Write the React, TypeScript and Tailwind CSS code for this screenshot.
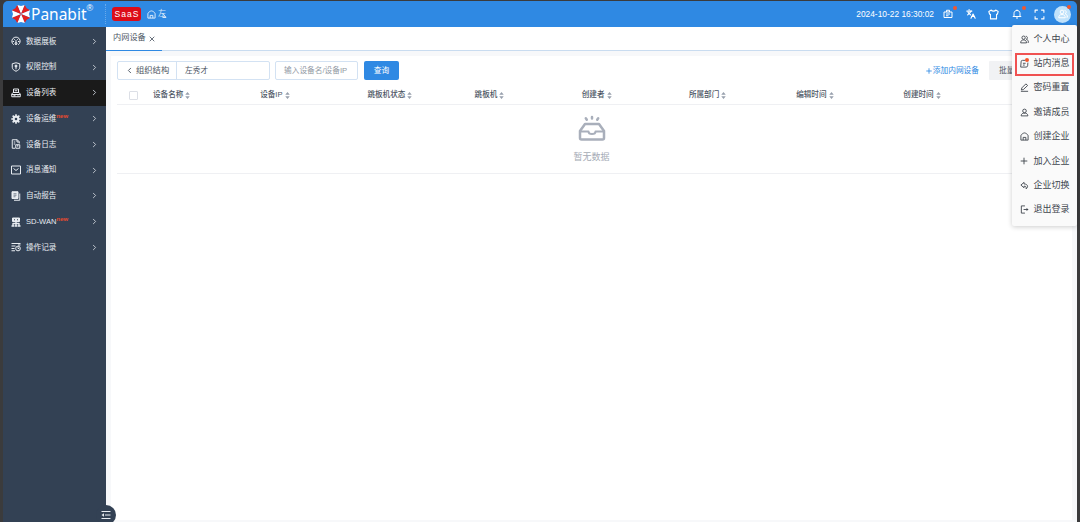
import type { ReactNode } from "react";
import { clsx } from "clsx";
import { ChevronLeft, ChevronRight, Languages, Plus, X } from "lucide-react";

const Glyph = ({
  children,
  className = "size-[10px]",
}: {
  children: ReactNode;
  className?: string;
}) => (
  <svg
    viewBox="0 0 20 20"
    fill="none"
    stroke="currentColor"
    strokeWidth={2}
    strokeLinejoin="round"
    className={clsx("shrink-0", className)}
  >
    {children}
  </svg>
);

const GaugeIcon = () => (
  <Glyph>
    <path d="M5.5 17.5A8.3 8.3 0 1 1 14.5 17.5" />
    <path d="M10 18V8M3 11h3M14 11h3M5.5 5.5l2 2M14.5 5.5l-2 2" />
    <circle cx="10" cy="15" r="2" />
  </Glyph>
);

const ShieldIcon = () => (
  <Glyph>
    <path d="M10 1.5l7.5 2v7c0 4-3.5 6.5-7.5 8-4-1.5-7.5-4-7.5-8v-7z" />
    <circle cx="10" cy="8" r="2" fill="currentColor" />
    <path d="M10 9v5.5" />
  </Glyph>
);

const DeviceIcon = () => (
  <Glyph>
    <path d="M5 9V2h10v7M1.5 17.5V12L4 9h12l2.5 3v5.5z" />
    <path d="M7.5 5.5h5M1.5 13h17M5 15.5h4M13 15.5h2" />
  </Glyph>
);

const GearIcon = () => (
  <Glyph>
    <circle cx="10" cy="10" r="4.7" strokeWidth={4.2} />
    <path
      d="M10 .5v4M10 15.5v4M.5 10h4M15.5 10h4M3.3 3.3l3 3M13.7 13.7l3 3M3.3 16.7l3-3M13.7 6.3l3-3"
      strokeWidth={3.2}
    />
  </Glyph>
);

const LogIcon = () => (
  <Glyph>
    <path d="M8 18.5H2.5v-17h10l4 4V9M12 1.5V6h4.5M5.5 6h3M5.5 10h3" />
    <rect x="9.5" y="11.5" width="8" height="7" />
    <path d="M13.5 11.5v4" />
  </Glyph>
);

const MailIcon = () => (
  <Glyph>
    <rect x="1" y="2" width="18" height="16" />
    <path d="M5 7l5 4 5-4" />
  </Glyph>
);

const ReportIcon = () => (
  <Glyph>
    <path d="M2 1.5h12V15H2z" fill="currentColor" />
    <path d="M17.5 5v13.5H6" />
    <path d="M5 5.5h6M5 8.5h6M5 11.5h4" stroke="#334154" strokeWidth={1.2} />
  </Glyph>
);

const WanIcon = () => (
  <Glyph>
    <path d="M3 2h14v7H3z" fill="currentColor" />
    <path d="M10 9v9M4 18v-5h12v5M1 18h6M8 18h4M13 18h6" strokeWidth={2.8} />
    <path d="M6 5.5h2M12 5.5h2" stroke="#334154" />
  </Glyph>
);

const RecordIcon = () => (
  <Glyph>
    <path d="M1 3h18M1 8h8M1 13h6M1 17.5h7" strokeWidth={2.4} />
    <circle cx="14" cy="13" r="4.7" />
    <path d="M14 10.5V13h2.5M14 6h5" />
  </Glyph>
);

const UsersIcon = ({ className = "size-[9px]" }: { className?: string }) => (
  <Glyph className={className}>
    <circle cx="8" cy="6" r="3.7" />
    <path d="M1.5 17.5c0-4.5 2.5-6.5 6.5-6.5s6.500 2 6.500 6.500z" />
    <path d="M13 2.8c2.5.2 3.5 1.7 3.5 3.4s-1 2.8-2.5 3.3c3 .7 4.8 3 4.800 7H17" />
  </Glyph>
);

const UserIcon = () => (
  <Glyph className="size-[9px]">
    <circle cx="10" cy="6.5" r="4" />
    <path d="M2.5 17.5c0-2.5 1.5-5 4.5-6h6c3 1 4.500 3.500 4.500 6z" />
  </Glyph>
);

const MessageIcon = () => (
  <Glyph className="size-[9px]">
    <path d="M12 3H5.5C3.5 3 2.5 4 2.5 6l-1 12h12c2 0 3.3-1 3.5-3l.5-7" />
    <path d="M6.5 9.5h6M6.5 13.5h4" />
  </Glyph>
);

const PenIcon = () => (
  <Glyph className="size-[9px]">
    <path d="M4 11L13 2l4 3.5-9.5 9L3 15.500zM2 18.500h16" />
  </Glyph>
);

const HomeIcon = () => (
  <Glyph className="size-[9px]">
    <path d="M2 18V8C2 6 7.5 2 10 2s8 4 8 6v10z" />
    <path d="M7 18v-6h6v6" />
  </Glyph>
);

const SwitchIcon = () => (
  <Glyph className="size-[9px]">
    <path d="M9 3L2 9l7 6v-3.5c4-.5 5.5 2 4.5 6 5-3.5 5-10.5-4.5-11z" />
  </Glyph>
);

const ExitIcon = () => (
  <Glyph className="size-[9px]">
    <path d="M11 2H3v16h8M8 10h9" />
    <path d="M14.5 6.5L19 10l-4.5 3.5z" fill="currentColor" stroke="none" />
  </Glyph>
);

const LogoMark = () => (
  <svg viewBox="-10 -10 20 20" className="size-5 shrink-0">
    {[0, 45, 90, 135, 180, 225, 270, 315].map((angle, i) => (
      <path
        key={angle}
        d="M0 0L-3.8 -9.1L0 -8L3.8 -9.1Z"
        fill={i % 2 ? "#e3201f" : "#fff"}
        transform={`rotate(${angle})`}
      />
    ))}
  </svg>
);

const menu = [
  { label: "数据展板", icon: <GaugeIcon /> },
  { label: "权限控制", icon: <ShieldIcon /> },
  { label: "设备列表", icon: <DeviceIcon />, active: true },
  { label: "设备运维", icon: <GearIcon />, isNew: true },
  { label: "设备日志", icon: <LogIcon /> },
  { label: "消息通知", icon: <MailIcon /> },
  { label: "自动报告", icon: <ReportIcon /> },
  { label: "SD-WAN", icon: <WanIcon />, isNew: true },
  { label: "操作记录", icon: <RecordIcon /> },
];

const columns = [
  "设备名称",
  "设备IP",
  "跳板机状态",
  "跳板机",
  "创建者",
  "所属部门",
  "编辑时间",
  "创建时间",
];

const userMenu = [
  { label: "个人中心", icon: <UsersIcon /> },
  { label: "站内消息", icon: <MessageIcon />, dot: true },
  { label: "密码重置", icon: <PenIcon /> },
  { label: "邀请成员", icon: <UserIcon /> },
  { label: "创建企业", icon: <HomeIcon /> },
  { label: "加入企业", icon: <Plus size={10} strokeWidth={2.2} className="-ml-px" /> },
  { label: "企业切换", icon: <SwitchIcon /> },
  { label: "退出登录", icon: <ExitIcon /> },
];

const Dot = ({ className }: { className: string }) => (
  <span className={clsx("absolute size-1 rounded-full bg-[#f4562c]", className)} />
);

const Header = () => (
  <header className="flex h-[26px] shrink-0 items-center rounded-t-[5px] bg-[#2f89e3] text-white">
    <div className="flex w-[102px] shrink-0 items-center pl-2">
      <LogoMark />
      <span className="font-['Noto_Sans','Open_Sans',sans-serif] text-[15.5px] leading-5">
        Panabit
      </span>
      <span className="mb-3 text-[9px] leading-3">®</span>
    </div>
    <span className="h-5 border-l border-dotted border-[#69a9ea]" />
    <span className="ml-[6px] flex h-[14px] w-[29px] items-center justify-center rounded-[3px] bg-[#dc0d18] pl-px font-['Liberation_Sans',sans-serif] text-[8.5px] font-medium tracking-[1px]">
      SaaS
    </span>
    <span className="ml-[6px] flex opacity-90">
      <HomeIcon />
    </span>
    <span className="ml-[2px] flex items-center text-[8px] opacity-80">
      左
      <svg viewBox="0 0 4 8" className="-ml-1 h-2 w-[5px]">
        <path d="M0 3L3.5 7.5H0" fill="none" stroke="currentColor" />
      </svg>
    </span>

    <span className="mr-[9px] ml-auto font-['Liberation_Sans',sans-serif] text-[8.4px]">
      2024-10-22 16:30:02
    </span>
    <div className="flex shrink-0 items-center">
      <span className="relative mr-[13px]">
        <Glyph>
          <path d="M2 6h16v11H2zM7 6V2.5h6V6M6 10h8M6 13.5h5" />
        </Glyph>
        <Dot className="-top-[3px] -right-[4px]" />
      </span>
      <Languages size={10} strokeWidth={2.8} className="mr-[12px] shrink-0" />
      <Glyph className="mr-[13px] size-[11px]">
        <path d="M6 2c1.5 2.5 6.5 2.5 8 0l4.5 2.5L17 9.5h-1.5V18h-11V9.5H3L1.5 4.5z" />
      </Glyph>
      <span className="relative mr-[12px]">
        <Glyph>
          <path d="M4 15V9c0-4 2.5-6 6-6s6 2 6 6v6M1.5 15h17M8 18h4M10 1v2" />
        </Glyph>
        <Dot className="-top-[3px] -right-[4px]" />
      </span>
      <Glyph className="mr-[9px] size-[11px]">
        <path d="M2 7V2h5M13 2h5v5M18 13v5h-5M7 18H2v-5" />
      </Glyph>
      <span className="relative mr-[6px] flex size-[17px] shrink-0 items-center justify-center rounded-full bg-[#c0e2fb]">
        <UsersIcon className="size-[10px] text-white" />
        <Dot className="-top-px right-0" />
      </span>
    </div>
  </header>
);

const Sidebar = () => (
  <aside className="relative w-[103px] shrink-0 bg-[#334154] pt-[1.5px] text-[#e8ecf1]">
    {menu.map(({ label, icon, active, isNew }) => (
      <div
        key={label}
        className={clsx(
          "flex h-[25.75px] items-center pr-[7px] pl-2",
          active && "bg-[#1a1a1a]"
        )}
      >
        {icon}
        <span className="ml-[5px] text-[7.6px]">{label}</span>
        {isNew && (
          <sup className="-top-[3px] text-[6px] font-bold text-[#e84a2e]">
            new
          </sup>
        )}
        <ChevronRight size={9} strokeWidth={2.5} className="ml-auto text-[#c3c9d1]" />
      </div>
    ))}
    <div className="absolute -right-[10px] -bottom-[3px] flex size-5 items-center justify-center rounded-full bg-[#334154]">
      <Glyph>
        <path d="M1 3h18M8 10h11M1 17h18" />
        <path d="M6 6.5v7L1 10z" fill="currentColor" stroke="none" />
      </Glyph>
    </div>
  </aside>
);

const SortIcon = () => (
  <svg viewBox="0 0 6 9" className="ml-[2px] h-[9px] w-[5px] text-[#98a0ad]">
    <path d="M3 .3L5.7 3.6H.3zM3 8.7L5.7 5.4H.3z" fill="currentColor" />
  </svg>
);

const EmptyState = () => (
  <div className="flex h-[69px] flex-col items-center border-b border-[#eff0f3] pt-[10px] pr-[6px]">
    <svg
      viewBox="0 0 28 26"
      fill="none"
      stroke="#a9afbb"
      strokeWidth={2.5}
      strokeLinejoin="round"
      strokeLinecap="round"
      className="h-[26px] w-7"
    >
      <path d="M7 9h14l5 7v7a1.5 1.5 0 0 1-1.5 1.5h-21A1.5 1.5 0 0 1 2 23v-7z" />
      <path d="M2 16.5h8.5c0 1.5 1.5 2.5 3.5 2.5s3.5-1 3.5-2.500H26" strokeWidth={2} />
      <path d="M14 2v1.5M7.800 3.200l1 1.500M20.200 3.200l-1 1.500" />
    </svg>
    <span className="mt-[10px] text-[9px] leading-3 text-[#a5abb5]">暂无数据</span>
  </div>
);

const DeviceTable = () => (
  <section className="text-[#4c5563]">
    <div className="flex h-[19px] items-center border-b border-[#eff0f3] pl-3 text-[7.6px] font-medium">
      <span className="mr-[15px] size-[9px] shrink-0 rounded-[1px] border border-[#dcdfe6]" />
      {columns.map((column) => (
        <div key={column} className="flex w-[107.2px] shrink-0 items-center">
          {column}
          <SortIcon />
        </div>
      ))}
    </div>
    <EmptyState />
  </section>
);

const Toolbar = () => (
  <div className="mr-[6px] flex h-[19px] text-[8.3px] text-[#4c5563]">
    <div className="flex w-[153px] rounded-[2px] border border-[#d3e2f3]">
      <span className="flex w-[59px] items-center border-r border-[#d3e2f3] pl-[7px]">
        <ChevronLeft size={9} strokeWidth={2.5} className="mr-[2px]" />
        组织结构
      </span>
      <span className="flex items-center pl-[8px] text-[7.7px]">左秀才</span>
    </div>
    <div className="ml-[5px] flex w-[83px] items-center rounded-[2px] border border-[#d3e2f3] pl-2 text-[7.7px] text-[#9299a4]">
      输入设备名/设备IP
    </div>
    <div className="ml-[6px] flex w-[35px] items-center justify-center rounded-[2px] bg-[#2f89e3] text-[7.7px] text-white">
      查询
    </div>
    <div className="ml-auto flex items-center text-[7.7px] text-[#2f89e3]">
      <Plus size={8} strokeWidth={2.5} />
      添加内网设备
    </div>
    <div className="ml-[10px] flex w-[77px] items-center rounded-[1px] bg-[#f1f2f4] pl-[10px] text-[7.7px]">
      批量操作
    </div>
  </div>
);

const UserMenu = () => (
  <ul className="absolute top-[25px] left-[1012px] h-[201px] w-[65px] rounded-[2px] bg-[#fafafa] pt-[2px] text-[9px] text-[#41464e] shadow-[0_1px_5px_rgba(0,0,0,0.2)]">
    {userMenu.map(({ label, icon, dot }) => (
      <li key={label} className="relative flex h-[24.4px] items-center pl-2">
        <span className="flex w-[10px] justify-start">{icon}</span>
        <span className="ml-[3.5px] whitespace-nowrap">{label}</span>
        {dot && (
          <>
            <Dot className="top-[7px] left-[13px]" />
            <span className="absolute inset-x-[3px] top-[2px] bottom-0 border-2 border-[#f05252]" />
          </>
        )}
      </li>
    ))}
  </ul>
);

export default function App() {
  return (
    <div className="relative flex h-[522px] w-[1080px] flex-col overflow-hidden bg-[#3b3b3c] px-[3px] pt-px font-['Liberation_Sans','Noto_Sans_CJK_SC',sans-serif] leading-none">
      <Header />
      <div className="flex min-h-0 flex-1 bg-[#f7f8fa]">
        <Sidebar />
        <main className="flex min-w-0 flex-1 flex-col">
          <nav className="flex h-6 shrink-0 border-b border-[#c9dcf0] bg-white">
            <div className="flex h-6 w-14 items-center border-b-[1.5px] border-[#2f89e3] pl-[7px] text-[8.2px] text-[#4c5563]">
              内网设备
              <X size={8} strokeWidth={2.5} className="ml-[2px]" />
            </div>
          </nav>
          <div className="mt-[5px] mr-[5px] mb-[2px] ml-[5px] flex-1 bg-white pt-[5px] pl-[6px]">
            <Toolbar />
            <div className="mt-[6px]">
              <DeviceTable />
            </div>
          </div>
        </main>
      </div>
      <UserMenu />
    </div>
  );
}
